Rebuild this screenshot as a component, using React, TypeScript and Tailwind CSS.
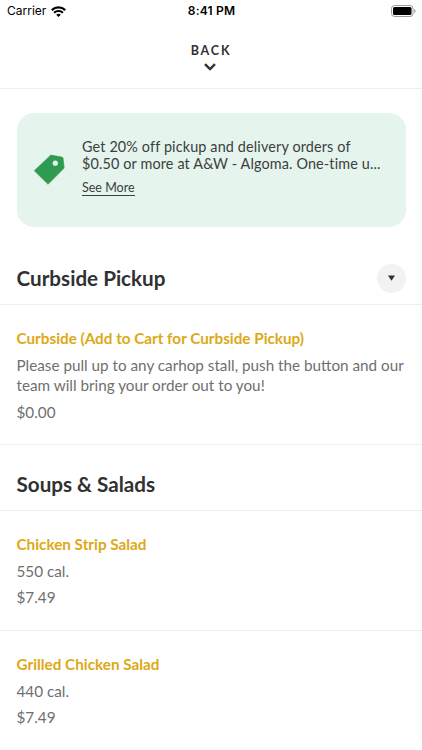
type Item = {
  name: string;
  details: string;
  price: string;
};

const curbside: Item[] = [
  {
    name: "Curbside (Add to Cart for Curbside Pickup)",
    details:
      "Please pull up to any carhop stall, push the button and our team will bring your order out to you!",
    price: "$0.00",
  },
];

const salads: Item[] = [
  { name: "Chicken Strip Salad", details: "550 cal.", price: "$7.49" },
  { name: "Grilled Chicken Salad", details: "440 cal.", price: "$7.49" },
];

function StatusBar() {
  return (
    <div className="grid h-[22px] grid-cols-3 items-center pl-[7px] pr-[6px] font-['Inter',sans-serif] text-[12px] leading-[22px] text-black">
      <div className="flex items-center gap-[5px]">
        <span>Carrier</span>
        <svg width="15" height="11" viewBox="0 0 15 11" fill="none" stroke="#000" strokeWidth="2.2">
          <path d="M0.8 4.1a9.6 9.6 0 0 1 13.4 0" />
          <path d="M3.1 6.8a6.3 6.3 0 0 1 8.8 0" />
          <path d="M5.2 8.8a3.3 3.3 0 0 1 4.6 0L7.5 11z" fill="#000" stroke="none" />
        </svg>
      </div>
      <span className="text-center font-semibold tracking-[0.2px]">8:41 PM</span>
      <svg className="justify-self-end" width="25" height="12" viewBox="0 0 25 12">
        <rect x="0.5" y="0.5" width="21.5" height="11" rx="3" fill="#fff" stroke="#999" />
        <rect x="2" y="2" width="18.5" height="8" rx="1.5" fill="#000" />
        <path d="M23.2 4v4c.8-.3 1.3-1.1 1.3-2s-.5-1.7-1.3-2z" fill="#999" />
      </svg>
    </div>
  );
}

function Promo() {
  return (
    <div className="mx-[16.5px] mt-[24px] flex h-[114px] rounded-[17px] bg-[#e5f4ed] pl-[17px] text-[#3b3f3d]">
      <svg className="mt-[41px] shrink-0" width="31" height="31" viewBox="0 0 31 31">
        <path
          d="M16.8 1.1 27.6 3q1.2.3 1.5 1.5L30.2 14 14.1 30.3 0.3 16.7z"
          fill="#2e9b50"
          stroke="#2e9b50"
          strokeWidth="0.6"
          strokeLinejoin="round"
        />
        <circle cx="21.3" cy="9.2" r="2.6" fill="#e5f4ed" />
      </svg>
      <div className="ml-[17.5px] pt-[25px]">
        <p className="whitespace-nowrap text-[14.4px] leading-[17px] tracking-[0.14px]">
          Get 20% off pickup and delivery orders of
          <br />
          $0.50 or more at A&amp;W - Algoma. One-time u...
        </p>
        <button className="mt-[8px] block border-b border-[#3b3f3d] text-[12.5px] leading-[15px]">
          See More
        </button>
      </div>
    </div>
  );
}

function SectionTitle({ title, toggle }: { title: string; toggle?: boolean }) {
  return (
    <div className="flex h-[66px] items-center justify-between border-b border-[#eeeeee] pl-[16.5px] pr-[16.5px] pt-[13px]">
      <h2 className="text-[20.65px] font-bold leading-[26px] text-[#303133]">{title}</h2>
      {toggle && (
        <button className="flex size-[29px] items-center justify-center rounded-full bg-[#f2f2f2]">
          <svg width="7" height="6" viewBox="0 0 7 6">
            <path d="M0 0.5h7L3.5 5.8z" fill="#303133" />
          </svg>
        </button>
      )}
    </div>
  );
}

function MenuItem({ item }: { item: Item }) {
  return (
    <div className="border-b border-[#eeeeee] pl-[16.5px] pr-[16px] pb-[22.6px] pt-[23px] text-[15.25px] leading-[20px] text-[#6f6f6f]">
      <h3 className="font-bold text-[#dda915]">{item.name}</h3>
      <p className="mt-[7px] leading-[20.4px]">{item.details}</p>
      <p className="mt-[5.8px]">{item.price}</p>
    </div>
  );
}

export default function App() {
  return (
    <main className="h-[750px] w-[422px] overflow-hidden bg-white font-['Lato',sans-serif]">
      <StatusBar />
      <header className="flex h-[67px] flex-col items-center border-b border-[#eeeeee] pt-[21px]">
        <span className="text-[12.5px] font-bold leading-[16px] tracking-[1.8px] text-[#303133]">
          BACK
        </span>
        <svg className="mr-[2px] mt-[4px]" width="12" height="8" viewBox="0 0 12 8" fill="none">
          <path d="M1 1.2 6 6l5-4.8" stroke="#303133" strokeWidth="2.4" />
        </svg>
      </header>

      <Promo />

      <div className="mt-[12px]">
        <SectionTitle title="Curbside Pickup" toggle />
        {curbside.map((item) => (
          <MenuItem key={item.name} item={item} />
        ))}
        <SectionTitle title="Soups & Salads" />
        {salads.map((item) => (
          <MenuItem key={item.name} item={item} />
        ))}
      </div>
    </main>
  );
}
